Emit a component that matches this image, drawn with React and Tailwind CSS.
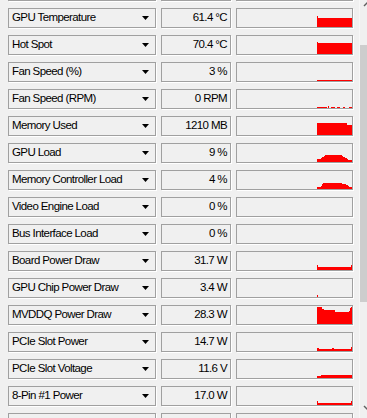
const rows = [
  { label: '', value: '', shapes: [] },
  {
    label: 'GPU Temperature',
    value: '61.4 °C',
    shapes: ['80,18 80,7 81,7 81,8.5 115,8.5 115,18'],
  },
  {
    label: 'Hot Spot',
    value: '70.4 °C',
    shapes: ['80,18 80,5.5 81,5.5 81,6.5 115,6.5 115,18'],
  },
  {
    label: 'Fan Speed (%)',
    value: '3 %',
    shapes: ['80,18 80,17 115,17 115,18'],
  },
  {
    label: 'Fan Speed (RPM)',
    value: '0 RPM',
    shapes: [
      '80,17.5 80,16.5 90,16.5 90,17.5',
      '91,17.5 91,16 92,16 92,17.5',
      '94,17.5 94,16.5 98,16.5 98,17.5',
      '100,17.5 100,16.5 103,16.5 103,17.5',
      '106,17.5 106,16.5 108,16.5 108,17.5',
      '112,17.5 112,16.5 115,16.5 115,17.5',
    ],
  },
  {
    label: 'Memory Used',
    value: '1210 MB',
    shapes: ['80,18 80,6.3 110,6.3 110,8 115,8 115,18'],
  },
  {
    label: 'GPU Load',
    value: '9 %',
    shapes: ['80,18 80,15 84,14.5 86,13 88,11.5 90,11 104,11 106,12.5 108,13.7 110,14.5 112,16 115,16.5 115,18'],
  },
  {
    label: 'Memory Controller Load',
    value: '4 %',
    shapes: ['80,18 80,16 84,15.5 86,12.5 88,11.7 104,11.7 106,13 109,13.5 112,15.5 115,16 115,18'],
  },
  { label: 'Video Engine Load', value: '0 %', shapes: [] },
  { label: 'Bus Interface Load', value: '0 %', shapes: [] },
  {
    label: 'Board Power Draw',
    value: '31.7 W',
    shapes: ['80,18 80,13 81,13 81,14.5 114,14.5 114,13 115,13 115,18'],
  },
  {
    label: 'GPU Chip Power Draw',
    value: '3.4 W',
    shapes: ['80,18 80,16 81,16 81,18'],
  },
  {
    label: 'MVDDQ Power Draw',
    value: '28.3 W',
    shapes: ['80,18 80,0.5 85,0.5 85,2.5 87,3 87,4 98,4 98,5.5 112,5.5 113,4 114,1 115,0.5 115,18'],
  },
  {
    label: 'PCIe Slot Power',
    value: '14.7 W',
    shapes: ['80,18 80,14.5 82,14.5 82,15.5 95,15.5 95,14.5 96.5,14.5 96.5,15.5 114,15.5 114,13.5 115,13.5 115,18'],
  },
  {
    label: 'PCIe Slot Voltage',
    value: '11.6 V',
    shapes: ['80,18 80,15.5 84,15.5 84,14.5 115,14.5 115,18'],
  },
  {
    label: '8-Pin #1 Power',
    value: '17.0 W',
    shapes: ['80,18 80,13.5 81,13.5 81,16 114,16 114,13.5 115,13.5 115,18'],
  },
  { label: '', value: '', shapes: [] },
];

const box = 'h-[20px] border border-[#a0a0a0] shadow-[1px_1px_0_#ffffff] bg-[#f0f0f0] flex items-center';

function Row({ label, value, shapes }) {
  return (
    <div className="flex gap-[5px] pl-[8px]">
      <div className={`${box} w-[148px] justify-between pl-[3px] pr-[6px]`}>
        <span className="pb-[1px] whitespace-nowrap">{label}</span>
        <svg width="7" height="4" viewBox="0 0 7 4" className="shrink-0">
          <polygon points="0,0 7,0 3.5,4" fill="#000" />
        </svg>
      </div>
      <div className={`${box} w-[70px] justify-end pr-[3px]`}>
        <span className="pb-[1px] whitespace-nowrap">{value}</span>
      </div>
      <div className={`${box} w-[117px]`}>
        <svg width="115" height="18" viewBox="0 0 115 18" className="block" shapeRendering="crispEdges">
          {shapes.map((p, i) => (
            <polygon key={i} points={p} fill="#ff0000" />
          ))}
        </svg>
      </div>
    </div>
  );
}

export default function App() {
  return (
    <div
      className="w-[367px] h-[418px] overflow-hidden bg-[#f0f0f0] flex text-[11.5px] tracking-[-0.6px] text-black"
      style={{ fontFamily: '"Liberation Sans", Arial, sans-serif' }}
    >
      <div className="w-[359px] overflow-hidden">
        <div className="flex flex-col gap-[7px] mt-[-19px]">
          {rows.map((r, i) => (
            <Row key={i} {...r} />
          ))}
        </div>
      </div>
      <div className="w-[8px] h-full flex flex-col bg-[#f0f0f0] border-l border-[#f7f7f7]">
        <div className="h-[17px] shrink-0">
          <svg width="8" height="17" viewBox="0 0 8 17" className="block">
            <polyline points="4,6 8,2" fill="none" stroke="#606060" strokeWidth="1.5" />
          </svg>
        </div>
        <div className="flex-1">
          <div className="mt-[28px] h-[257px] bg-[#cdcdcd]" />
        </div>
        <div className="h-[17px] shrink-0">
          <svg width="8" height="17" viewBox="0 0 8 17" className="block">
            <polyline points="4,5 8,9" fill="none" stroke="#606060" strokeWidth="1.5" />
          </svg>
        </div>
      </div>
    </div>
  );
}
